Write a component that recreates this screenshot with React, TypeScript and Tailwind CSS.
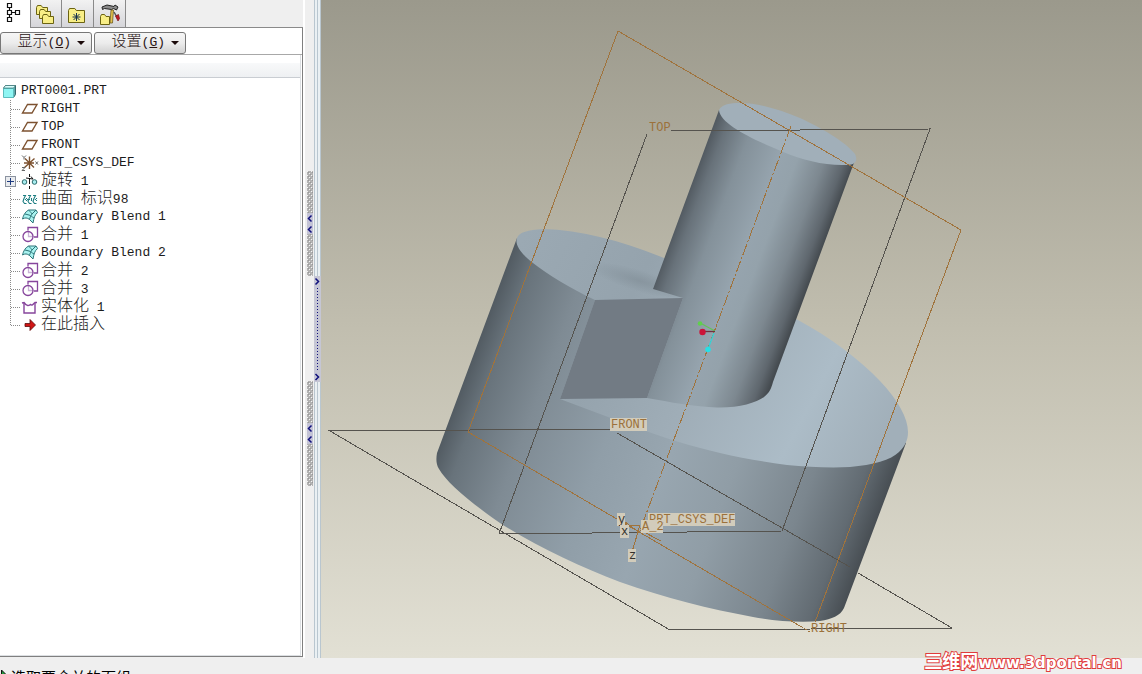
import React from 'react';

interface TreeItem {
    label: string;
    icon: JSX.Element;
    expandable?: boolean;
}

const PlaneIcon = () => (
    <svg className="h-[18px] w-[18px]" viewBox="0 0 18 18" fill="none" stroke="#7d5230" strokeWidth="1.4">
        <path d="M1.5 13 6.5 4.5h9.5L11 13Z" />
    </svg>
);

const CsysIcon = () => (
    <svg className="h-[18px] w-[18px]" viewBox="0 0 18 18" fill="none" stroke="#7d5230" strokeWidth="1.4">
        <path d="M8.5 2.5V15M3 9h10M4 4.5l9 9M13.5 4.5l-10 9" />
        <path d="M1 1.5l2 2 2-2M3 3.5v2M14.5 7.5l2.5 3M17 7.5l-2.5 3M1 13.5h3l-3 3h3" stroke="#666" strokeWidth="1" />
    </svg>
);

const RevolveIcon = () => (
    <svg className="h-[18px] w-[18px]" viewBox="0 0 18 18" fill="#a8eef0" stroke="#2c6a6c">
        <circle cx="3.5" cy="10" r="2.3" />
        <circle cx="13.5" cy="10" r="2.3" />
        <path d="M8.5 2v3M8.5 7v5M8.5 14v3M5 6l7 1M12 7l-2-2.5" fill="none" stroke="#111" />
    </svg>
);

const SurfaceIcon = () => (
    <svg className="h-[18px] w-[18px]" viewBox="0 0 18 18" fill="none" stroke="#1f7f83" strokeWidth="1.1">
        <path d="M2 5.5h2.5L3 8.500 2 11.500l1.500 2h2M7 5.5h2.5L8 8.500 7 11.500l1.500 2h2M12 5.5h2.5L13 8.500 12 11.500l1.500 2h2" />
        <path d="M5.500 8v4M10.500 8v4M15.500 8v4M2 9.500h14" strokeDasharray="1 1" />
    </svg>
);

const BlendIcon = () => (
    <svg className="h-[18px] w-[18px]" viewBox="0 0 18 18" fill="#a9f3f0" stroke="#2d7478">
        <path d="M1.500 11C2.500 7 4 4 7.500 2h7.500l1.500 2.500C13.500 7 13 10 12 15L8.500 11.500C6 9.500 4 9.500 1.500 11Z" />
        <path d="M4 6l4 1c2 .5 3 2 5 3M7.500 2c2 2 3 3 3.500 4C9.500 8 9 9.500 8.500 11.500M11 6l4-4" fill="none" />
    </svg>
);

const MergeIcon = () => (
    <svg className="h-[18px] w-[18px]" viewBox="0 0 18 18" fill="none" stroke="#86459c" strokeWidth="1.3">
        <path d="M7.500 5.500v5h5" stroke="#c9b3d6" />
        <path d="M7 4.500V1.500h9.500v9.500H13" />
        <circle cx="7" cy="10.500" r="5" />
    </svg>
);

const SolidifyIcon = () => (
    <svg className="h-[18px] w-[18px]" viewBox="0 0 18 18" fill="none" stroke="#86459c" strokeWidth="1.4">
        <path d="M3 5v10h11V5" />
        <path d="M1 5l2-.5c3 4.500 5 3 6.500 2C11 8 12.500 6 14 4.500h2" />
    </svg>
);

const InsertIcon = () => (
    <svg className="h-[18px] w-[18px]" viewBox="0 0 18 18">
        <path d="M4 7.500h5V3.500l5.500 5.500L9 14.500v-4H4Z" fill="#d01515" stroke="#5b0b0b" strokeWidth=".8" />
    </svg>
);

const items: TreeItem[] = [
    { label: 'RIGHT', icon: <PlaneIcon /> },
    { label: 'TOP', icon: <PlaneIcon /> },
    { label: 'FRONT', icon: <PlaneIcon /> },
    { label: 'PRT_CSYS_DEF', icon: <CsysIcon /> },
    { label: '旋转 1', icon: <RevolveIcon />, expandable: true },
    { label: '曲面 标识98', icon: <SurfaceIcon /> },
    { label: 'Boundary Blend 1', icon: <BlendIcon /> },
    { label: '合并 1', icon: <MergeIcon /> },
    { label: 'Boundary Blend 2', icon: <BlendIcon /> },
    { label: '合并 2', icon: <MergeIcon /> },
    { label: '合并 3', icon: <MergeIcon /> },
    { label: '实体化 1', icon: <SolidifyIcon /> },
    { label: '在此插入', icon: <InsertIcon /> },
];

// Chinese runs are set larger so that one glyph takes two Latin cells
const MixedText: React.FC<{ text: string }> = ({ text }) => (
    <span className="whitespace-pre text-[13px] leading-[18px]">
        {text.split(/([\u4e00-\u9fff]+)/).filter(Boolean).map((run, i) => (
            /[\u4e00-\u9fff]/.test(run) ? <span key={i} className="text-base font-light leading-[18px]">{run}</span> : run
        ))}
    </span>
);

const TreeRow: React.FC<{ item: TreeItem; last: boolean }> = ({ item, last }) => (
    <li className="flex h-[18px] items-center text-[#1c1c1c]">
        <span className="relative h-[18px] w-[21px] shrink-0">
            <svg className="h-[18px] w-[21px]" viewBox="0 0 21 18" fill="none" stroke="#8a8a8a" strokeDasharray="1 1">
                <path d={last ? 'M10.500 0V9' : 'M10.500 0V18'} />
                <path d="M11 9.500H21" />
            </svg>
            {item.expandable && (
                <button aria-label="展开" className="absolute left-[5px] top-1 flex h-[11px] w-[11px] items-center justify-center border border-[#8b93a0] bg-[#e9ebee]">
                    <svg className="h-[7px] w-[7px]" viewBox="0 0 7 7" stroke="#1d3a80"><path d="M3.500 0v7M0 3.500h7" /></svg>
                </button>
            )}
        </span>
        <span className="mr-0.5 shrink-0">{item.icon}</span>
        <MixedText text={item.label} />
    </li>
);

const Folder: React.FC<{ x: number; y: number; w: number; h: number }> = ({ x, y, w, h }) => (
    <path d={`M${x} ${y + h}V${y + 2}l1-2h${w / 3}l1.500 2H${x + w}v${h - 2}Z`} fill="#f8ee86" stroke="#6b6312" />
);

const TabBar = () => (
    <div role="tablist" className="flex h-7 shrink-0 bg-[#efefef]">
        <button role="tab" aria-selected="true" aria-label="模型树" className="w-[30px] bg-white">
            <svg className="h-7 w-[30px]" viewBox="0 0 30 28" fill="#fff" stroke="#111" strokeWidth="1.200">
                <path d="M9.500 8v3M9.500 15v3M12 12.500h3" />
                <path d="M7.500 3.500h4v4h-4ZM7.500 10.500h4v4h-4ZM7.500 17.500h4v4h-4ZM15.500 10.500h4v4h-4Z" />
            </svg>
        </button>
        <button role="tab" aria-label="文件夹浏览器" className="w-8 border border-t-0 border-[#8a8a8a] bg-linear-to-b from-[#f2f2f2] to-[#d6d6da]">
            <svg className="h-[26px] w-[30px]" viewBox="0 0 30 26">
                <Folder x={5.5} y={4.5} w={11} h={9} />
                <Folder x={8.5} y={8.5} w={11} h={9} />
                <Folder x={11.5} y={13.5} w={11} h={9} />
            </svg>
        </button>
        <button role="tab" aria-label="收藏夹" className="w-8 border border-l-0 border-t-0 border-[#8a8a8a] bg-linear-to-b from-[#f2f2f2] to-[#d6d6da]">
            <svg className="h-[26px] w-[31px]" viewBox="0 0 31 26">
                <Folder x={6.5} y={7.5} w={16} h={14} />
                <path d="M14.500 12v8M10.500 16h8M11.500 13l6 6M17.500 13l-6 6" stroke="#14304f" />
            </svg>
        </button>
        <button role="tab" aria-label="连接" className="w-8 border border-l-0 border-t-0 border-[#8a8a8a] bg-linear-to-b from-[#f2f2f2] to-[#d6d6da]">
            <svg className="h-[26px] w-[31px]" viewBox="0 0 31 26">
                <Folder x={6.5} y={13.5} w={9} h={10} />
                <path d="M8 6l5-2 7 1.500 1-1.500 3 2-1.500 3-3-1.500-2 1-7-1-2 1Z" fill="#8b8b8b" stroke="#222" />
                <path d="M17 9l-1 13h2.500l1-13Z" fill="#e6c34e" stroke="#5d4a12" strokeWidth=".7" />
                <path d="M20 11l4 7" stroke="#555" strokeWidth="1.500" />
                <path d="M21.500 15l3-1.500 1 4-1.500 2.500Z" fill="#c01a28" stroke="#711" strokeWidth=".7" />
            </svg>
        </button>
        <div className="flex-1 border-b border-[#8a8a8a]" />
    </div>
);

const MenuButton: React.FC<{ label: string; hotkey: string }> = ({ label, hotkey }) => (
    <button aria-haspopup="menu" className="flex h-[22px] w-[92px] items-center justify-end gap-1.5 rounded-[3px] border border-[#777] bg-linear-to-b from-[#f6f6f6] via-[#ececec] to-[#d2d2d2] pr-1.5 text-[13px] text-[#2a1414]">
        <span className="whitespace-nowrap leading-5">
            <span className="text-[15px] font-light">{label}</span>(<u>{hotkey}</u>)
        </span>
        <svg className="h-1 w-2" viewBox="0 0 8 4"><path d="M0 0h8L4 4Z" fill="#1b0a0a" /></svg>
    </button>
);

const ModelTree = () => (
    <aside className="flex w-[303px] shrink-0 flex-col">
        <TabBar />
        <div className="flex min-h-0 flex-1 flex-col border-b border-r border-[#7f7f7f] bg-white pt-1">
            <div className="flex gap-0.5 border-b border-[#a8a8a8]">
                <MenuButton label="显示" hotkey="O" />
                <MenuButton label="设置" hotkey="G" />
            </div>
            <div className="mr-px flex min-h-0 flex-1 flex-col border-b border-r border-[#dcdfe2]">
                <div className="mt-2 h-[15px] shrink-0 border-b border-[#c9cdd2] bg-linear-to-b from-[#f8f9fa] to-[#eef0f2]" />
                <div className="overflow-hidden pt-1">
                    <div className="flex h-[18px] items-center text-[#1c1c1c]">
                        <svg className="mr-0.5 h-[18px] w-[19px]" viewBox="0 0 19 18" stroke="#34696c">
                            <path d="M3.500 6.500l2-3h10v9l-2 3Z" fill="#5fa9ac" />
                            <path d="M3.500 6.500h10v9h-10Z" fill="#8ff5f3" stroke="#5dbcbd" />
                            <path d="M3.500 6l2-2.500h10l-2 2.500Z" fill="#d8fffd" strokeWidth=".6" />
                        </svg>
                        <MixedText text="PRT0001.PRT" />
                    </div>
                    <ul>
                        {items.map((item, i) => <TreeRow key={i} item={item} last={i === items.length - 1} />)}
                    </ul>
                </div>
            </div>
        </div>
    </aside>
);

const Grip = () => (
    <svg className="h-[105px] w-1.5" viewBox="0 0 6 105" shapeRendering="crispEdges">
        <defs>
            <pattern id="grip" width="4" height="4" patternUnits="userSpaceOnUse">
                <rect width="4" height="4" fill="#b2b2b2" />
                <path d="M0 0h1v1h-1ZM2 2h1v1h-1Z" fill="#f4f4f4" />
                <path d="M1 1h1v1h-1ZM3 3h1v1h-1Z" fill="#989898" />
            </pattern>
        </defs>
        <rect width="6" height="105" fill="url(#grip)" />
        <rect y="42" width="6" height="21" fill="#c3c3d6" />
        <path d="M4.500 44.500l-3 3 3 3M4.500 55.500l-3 3 3 3" fill="none" stroke="#10107c" strokeWidth="1.500" shapeRendering="auto" />
    </svg>
);

const Splitter = () => (
    <div className="flex w-[18px] shrink-0 bg-[#efefef]">
        <div className="flex w-[11px] flex-col items-center border-l-2 border-white pt-[171px]">
            <Grip />
            <div className="h-[105px]" />
            <Grip />
        </div>
        <div className="flex flex-1 flex-col">
            <div className="h-[276px] border-x border-[#b9c6cf] bg-[#eaf0f3] px-0.5"><div className="h-full border-l border-[#b9c6cf]" /></div>
            <svg className="h-[106px] w-[7px]" viewBox="0 0 7 106">
                <rect width="7" height="106" fill="#c5c6d4" />
                <path d="M3.500 12v82" stroke="#10107c" strokeDasharray="1 2" />
                <path d="M1.500 2.500l3 3-3 3M1.500 98l3 3-3 3" fill="none" stroke="#10107c" strokeWidth="1.500" />
            </svg>
            <div className="flex-1 border-x border-[#b9c6cf] bg-[#eaf0f3] px-0.5"><div className="h-full border-l border-[#b9c6cf]" /></div>
        </div>
    </div>
);

const Tag: React.FC<{ x: number; y: number; w: number; text: string; dark?: boolean }> = ({ x, y, w, text, dark }) => (
    <g>
        <rect x={x} y={y} width={w} height="13" fill="#d2ccbb" />
        <text x={x + 1} y={y + 10} fill={dark ? '#33312c' : '#9c713a'} fontSize="12">{text}</text>
    </g>
);

const Viewport = () => (
    <main className="min-w-0 flex-1 overflow-hidden bg-linear-to-b from-[#9b998c] via-[#c1beaf] to-[#e2e0d4]">
        <svg className="h-full w-full font-['Liberation_Mono',monospace]" viewBox="321 0 821 658" preserveAspectRatio="xMinYMin slice">
            <defs>
                <linearGradient id="base" gradientUnits="userSpaceOnUse" x1="480" y1="340" x2="890" y2="494">
                    <stop offset="0" stopColor="#535c63" />
                    <stop offset=".05" stopColor="#68737b" />
                    <stop offset=".17" stopColor="#7f8b94" />
                    <stop offset=".35" stopColor="#909ea8" />
                    <stop offset=".5" stopColor="#98a6b0" />
                    <stop offset=".65" stopColor="#909da6" />
                    <stop offset=".82" stopColor="#7b868e" />
                    <stop offset=".93" stopColor="#626b72" />
                    <stop offset="1" stopColor="#454b50" />
                </linearGradient>
                <linearGradient id="shaft" gradientUnits="userSpaceOnUse" x1="686" y1="200" x2="821" y2="251">
                    <stop offset="0" stopColor="#535b62" />
                    <stop offset=".08" stopColor="#68727a" />
                    <stop offset=".25" stopColor="#84919a" />
                    <stop offset=".5" stopColor="#96a4ae" />
                    <stop offset=".62" stopColor="#94a2ab" />
                    <stop offset=".8" stopColor="#7d8890" />
                    <stop offset=".93" stopColor="#5f676e" />
                    <stop offset="1" stopColor="#454b50" />
                </linearGradient>
                <linearGradient id="face" gradientUnits="userSpaceOnUse" x1="520" y1="240" x2="890" y2="430">
                    <stop offset="0" stopColor="#9ba9b3" />
                    <stop offset=".3" stopColor="#95a3ad" />
                    <stop offset=".55" stopColor="#a0aeb8" />
                    <stop offset=".8" stopColor="#acbcc7" />
                    <stop offset="1" stopColor="#a1afb9" />
                </linearGradient>
                <radialGradient id="dip" gradientUnits="userSpaceOnUse" cx="0" cy="0" r="1" gradientTransform="translate(640 281) rotate(17) scale(54 11)">
                    <stop offset="0" stopColor="#7f8c95" stopOpacity=".6" />
                    <stop offset="1" stopColor="#7f8c95" stopOpacity="0" />
                </radialGradient>
            </defs>

            {/* base cylinder */}
            <path d="M517 238L437 453C436 459 436 464 439 469C447 483 470 502 500 523C535 546 580 567 620 582C665 598 710 609 753 617C775 621 800 623 820 621C832 619 840 616 844 608L906 443L800 350L620 260Z" fill="url(#base)" />
            <path d="M517 238C519 232 528 230 543 229C583 230 624 242 664 258L700 270L798 320C830 337 860 360 880 381C898 400 908 418 908 432C908 440 905 446 899 452C891 460 873 465 850 467C830 468 808 467 787 465C764 462 742 458 720 453C690 446 665 438 640 429L560 399L595 300C570 288 547 274 533 263C524 256 514 246 517 238Z" fill="url(#face)" />
            <path d="M580 290L590 255 664 258 653 289 683 298Z" fill="url(#dip)" />

            {/* shaft */}
            <path d="M719 110L653 289L683 298L647 398C670 402 695 407 717 407.500C738 408 756 403 764 397C770 392 771 389 773 382L855 160L790 125Z" fill="url(#shaft)" />
            <path d="M719 110C722 104 730 103 740 103C760 103 780 110 800 118C820 127 846 142 855 154C858 160 856 165 847 165C825 166 803 160 783 152C757 141 720 125 719 110Z" fill="#a1afb9" />
            <path d="M595 300L683 298L647 398L560 399Z" fill="#727b84" />

            {/* datum planes */}
            <g fill="none" stroke="#55534e" shapeRendering="crispEdges">
                <path d="M647 134L499 534L782 531L930 129L671 131" />
                <path d="M611 429L330 431L670 630L952 628L858 573M850 567L617 433" />
            </g>
            <g fill="none" stroke="#a0733c" shapeRendering="crispEdges">
                <path d="M815 622L961 230L618 31L468 432L800 626" />
                <path d="M800 626L810 632" strokeDasharray="3 2" />
                <path d="M791 126L639 533" strokeDasharray="12 2 2 2" />
                <path d="M631 525H640L632 552M640 533L625 522M640 530L661 541" />
            </g>

            <text x="649" y="131" fontSize="12" fill="#9c713a">TOP</text>
            <text x="811" y="632" fontSize="12" fill="#9c713a">RIGHT</text>
            <Tag x={610} y={418} w={37} text="FRONT" />
            <Tag x={648} y={513} w={87} text="PRT_CSYS_DEF" />
            <Tag x={641} y={520} w={22} text="A_2" />
            <Tag x={617} y={513} w={8} text="y" dark />
            <Tag x={620} y={525} w={9} text="x" dark />
            <Tag x={628} y={549} w={8} text="z" dark />

            {/* spin centre */}
            <g strokeWidth="1.300">
                <path d="M702 324L715 331" stroke="#63c457" />
                <path d="M703 331.500H715" stroke="#70323e" />
                <path d="M714 333L708 349" stroke="#36d3d8" />
                <circle cx="700" cy="323.500" r="2.300" fill="#5fd04d" />
                <circle cx="702.500" cy="332" r="3.200" fill="#cc1438" />
                <circle cx="708" cy="349.500" r="2.800" fill="#27e0e6" />
            </g>
        </svg>
    </main>
);

export default function App() {
    return (
        <div className="relative flex h-screen flex-col overflow-hidden bg-[#efefef] font-['Liberation_Mono','Noto_Sans_CJK_SC',monospace]">
            <div className="flex min-h-0 flex-1">
                <div className="flex pb-px"><ModelTree /></div>
                <Splitter />
                <Viewport />
            </div>
            <footer className="flex h-4 shrink-0 items-start overflow-hidden pt-3 text-[15px] leading-5 text-black">
                <svg className="h-3 w-[11px] shrink-0" viewBox="0 0 11 12"><path d="M1.500 0l5 5-5 5Z" fill="#1fa03c" stroke="#111" /></svg>
                <span className="whitespace-nowrap">选取要合并的面组</span>
            </footer>
            <a href="#" className="absolute bottom-0.5 right-5 whitespace-nowrap font-['DejaVu_Sans','Noto_Sans_CJK_SC',sans-serif] text-[15px] font-bold leading-[18px] text-white [-webkit-text-stroke:2px_#e03c3c] [paint-order:stroke_fill]">
                <span className="text-lg leading-[18px]">三维网</span>www.3dportal.cn
            </a>
        </div>
    );
}
